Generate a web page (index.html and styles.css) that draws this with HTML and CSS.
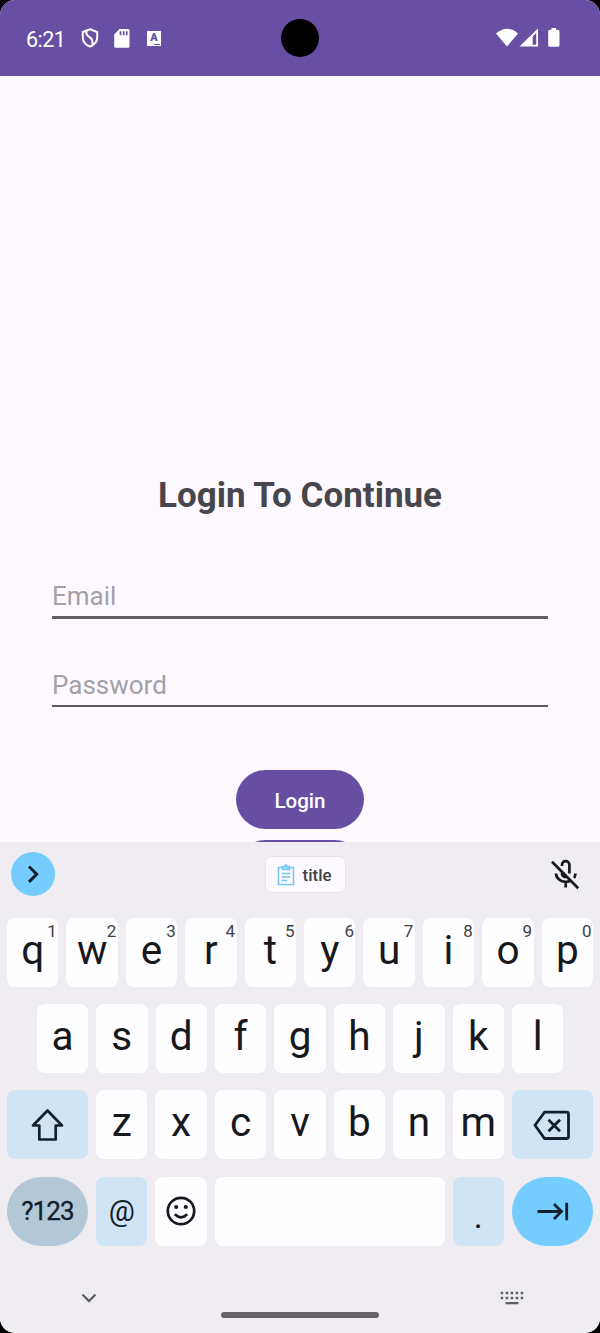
FILE: index.html
```html
<!DOCTYPE html>
<html lang="en">
<head>
<meta charset="utf-8">
<title>Login</title>
<link rel="stylesheet" href="styles.css">
</head>
<body>
<div class="phone">
  <header class="status">
    <span class="time">6:21</span>
    <svg class="ic shield" width="18" height="20" viewBox="0 0 18 20" fill="none" stroke="#fff" stroke-width="2"><path d="M9 1.300 16.200 4v5.200c0 4.500-3 7.700-7.200 9.300C4.800 16.900 1.800 13.700 1.800 9.200V4zM5.500 3c-.7 3 .6 4.800 3 6.200 2.600 1.600 3.600 4 2.800 7.600"/></svg>
    <svg class="ic sd" width="16" height="19" viewBox="0 0 16 19"><path fill="#fff" d="M5.500 0H14q1.500 0 1.500 1.500v15.700q0 1.500-1.500 1.500H1.700Q.2 18.700.2 17.200V5.500z"/><path stroke="#6750a4" stroke-width="1.700" d="M6.500 2.300v4M9.700 2.300v4M12.700 2.300v4"/></svg>
    <span class="abox">A<i></i></span>
    <span class="camera"></span>
    <svg class="right" width="66" height="20" viewBox="0 0 66 20" fill="#fff"><path d="M0 5.500Q11-4 22 5.500L11 18.500z"/><path d="M23.500 18.500 42 .5v18zM36.700 8.500v8.300h3.500V5z" fill-rule="evenodd"/><path d="M55.500 0h4.500v1.800h2q1.500 0 1.500 1.500v14q0 1.500-1.500 1.500h-8.300q-1.500 0-1.500-1.500v-14q0-1.500 1.500-1.500h1.800z"/></svg>
  </header>

  <main class="login">
    <h1 class="title">Login To Continue</h1>
    <div class="field email">Email</div>
    <div class="field password">Password</div>
    <button class="btn">Login</button>
    <div class="next"><div class="btn"></div></div>
  </main>

  <section class="keyboard">
    <div class="tools">
      <span class="expand"><svg width="44" height="44" viewBox="0 0 44 44" fill="none" stroke="#12202b" stroke-width="3"><path d="m18 14.500 7.700 7.700-7.700 7.700"/></svg></span>
      <span class="chip"><svg width="18" height="22" viewBox="0 0 18 22" fill="none" stroke="#78c5f0" stroke-width="1.500"><path d="M5 3.500H1.500v17h15v-17H13M4.700 9.500h8.600M4.700 13h8.600M4.700 16.500h5.500"/><path fill="#9ed9f8" d="M5.500 2.500h2L9 .8l1.500 1.700h2v3h-7z"/></svg>title</span>
      <svg class="mic" width="30" height="32" viewBox="0 0 30 32" fill="none" stroke="#17181b" stroke-width="2.700"><path d="m2 2.700 26.200 26.500M12 7V5.800a3.700 3.700 0 0 1 7.400 0v8.700M12 12v2.500a3.700 3.700 0 0 0 3.800 3.700M6 14.500c.3 5 4.500 8.300 9.700 8.300 1.800 0 3.400-.4 4.700-1.200M25.400 14.500c-.1 1.700-.5 3.200-1.300 4.400M15.700 23v5.500"/></svg>
    </div>
    <div class="row">
      <div class="key">q<sup>1</sup></div><div class="key">w<sup>2</sup></div><div class="key">e<sup>3</sup></div><div class="key">r<sup>4</sup></div><div class="key">t<sup>5</sup></div><div class="key">y<sup>6</sup></div><div class="key">u<sup>7</sup></div><div class="key">i<sup>8</sup></div><div class="key">o<sup>9</sup></div><div class="key">p<sup>0</sup></div>
    </div>
    <div class="row inset">
      <div class="key">a</div><div class="key">s</div><div class="key">d</div><div class="key">f</div><div class="key">g</div><div class="key">h</div><div class="key">j</div><div class="key">k</div><div class="key">l</div>
    </div>
    <div class="row">
      <div class="key wide blue"><svg width="34" height="34" viewBox="0 0 34 34" fill="none" stroke="#12202b" stroke-width="2.700" stroke-linejoin="round"><path d="M16.500 2.500 31 17.500H24.700V31.500H8.300V17.500H2z"/></svg></div>
      <div class="key">z</div><div class="key">x</div><div class="key">c</div><div class="key">v</div><div class="key">b</div><div class="key">n</div><div class="key">m</div>
      <div class="key wide blue"><svg width="38" height="32" viewBox="0 0 38 32" fill="none" stroke="#12202b" stroke-width="2.800" stroke-linejoin="round"><path d="M11.500 4.200H33.500Q35.500 4.200 35.500 6.200V28.500Q35.500 30.500 33.500 30.500H11.500L2 17.300z"/><path d="m15.500 11.800 11.500 11.500m0-11.500-11.500 11.500"/></svg></div>
    </div>
    <div class="row">
      <div class="key wide pill sym">?123</div>
      <div class="key blue at">@</div>
      <div class="key"><svg width="32" height="32" viewBox="0 0 32 32" fill="none" stroke="#17181b" stroke-width="2.700"><circle cx="16" cy="16" r="13.200"/><path d="M9.800 19.300q6.200 6 12.400 0"/><g fill="#17181b" stroke="none"><circle cx="11.200" cy="12" r="2.100"/><circle cx="20.800" cy="12" r="2.100"/></g></svg></div>
      <div class="key space"></div>
      <div class="key blue dot">.</div>
      <div class="key wide pill go"><svg width="34" height="20" viewBox="0 0 34 20" fill="none" stroke="#12202b" stroke-width="2.800"><path d="M1.500 9.500h24M18 2l7.500 7.500L18 17M30.700.7v17.600"/></svg></div>
    </div>
    <footer class="nav">
      <svg class="hide" width="18" height="12" viewBox="0 0 18 12" fill="none" stroke="#5f6065" stroke-width="2.300"><path d="m2.500 2.500 6.500 6.500 6.500-6.500"/></svg>
      <span class="handle"></span>
      <svg class="switch" width="24" height="15" viewBox="0 0 24 15" fill="none" stroke="#5f6065" stroke-width="2.500"><path stroke-dasharray="2.500 2.500" d="M.7 2h23M.7 7h23"/><path stroke-width="2.200" d="M5.500 12.200h13"/></svg>
    </footer>
  </section>
</div>
</body>
</html>
```
FILE: styles.css
```css
* { box-sizing: border-box; }
body { margin: 0; background: #000; font-family: Roboto, sans-serif; }
.phone { width: 600px; height: 1333px; display: flex; flex-direction: column; overflow: hidden; border-radius: 15px; background: #fef9fe; }

.status { height: 75.500px; flex: none; display: flex; align-items: center; padding: 1px 37px 0 26px; background: #674fa3; color: #fff; position: relative; }
.time { width: 55px; font-size: 21.500px; letter-spacing: -.5px; line-height: 26px; padding-top: 3px; }
.shield { margin-right: 15px; }
.sd { margin-right: 17px; }
.abox { width: 14px; height: 15px; background: #fff; color: #674fa3; font-size: 11px; font-weight: 900; line-height: 14px; text-align: center; position: relative; }
.abox i { position: absolute; right: 1px; bottom: 1px; width: 6px; height: 1px; background: #674fa3; }
.camera { position: absolute; left: 281px; top: 19px; width: 38px; height: 38px; border-radius: 50%; background: #000; }
.right { margin-left: auto; margin-right: 1px; }

.login { height: 766.500px; flex: none; display: flex; flex-direction: column; align-items: center; overflow: hidden; padding-top: 399.500px; }
.title { margin: 0; flex: none; font-size: 35px; line-height: 42px; font-weight: 700; color: #47464c; white-space: nowrap; }
.field { flex: none; width: 496px; font-size: 26px; line-height: 32px; font-weight: 400; color: #a3a1a7; }
.email { height: 55px; margin-top: 47px; padding-top: 16px; border-bottom: 3px solid #625c65; }
.password { height: 38px; margin-top: 50px; border-bottom: 2px solid #5c565f; }
.btn { width: 128.500px; height: 59px; border: 0; border-radius: 30px; background: #664fa3; color: #fff; font: 500 20.500px/59px Roboto, sans-serif; padding: 2px 0 0; flex: none; }
.login > .btn { margin-top: 62.500px; }
.next { flex: none; margin-top: 11.500px; height: 60px; }

.keyboard { flex: 1; background: #f0edf2; display: flex; flex-direction: column; padding: 0 7px; }
.tools { height: 76px; flex: none; display: flex; align-items: flex-start; justify-content: space-between; padding: 10px 13px 0 4px; }
.expand { width: 44px; height: 44px; border-radius: 50%; background: #75ccff; }
.chip { height: 37px; width: 81px; margin: 4px 0 0 5px; border-radius: 7px; border: 1px solid #e6e4ea; background: #fcfafe; display: flex; align-items: center; padding-left: 11px; gap: 8px; color: #414247; font-size: 17px; font-weight: 500; }
.mic { margin-top: 7px; }
.row { display: flex; gap: 8px; height: 69px; margin-bottom: 17.200px; flex: none; }
.inset { padding: 0 29.700px; }
.key { flex: 1; min-width: 0; border-radius: 8px; background: #fefdff; color: #17181b; font-size: 40.500px; line-height: 64px; text-align: center; position: relative; }
.key svg { display: block; margin: 18px auto 0; }
.key sup { position: absolute; top: 4px; right: 1.500px; font-size: 17px; line-height: 19px; color: #3f4046; }
.wide { flex: 0 0 81px; }
.blue { background: #cfe4f5; }
.pill { border-radius: 34.500px; }
.sym { background: #b3c8d6; font-size: 26px; font-weight: 400; letter-spacing: -.9px; line-height: 69px; color: #12202b; -webkit-text-stroke: .3px #12202b; }
.at { font-size: 29px; line-height: 68px; color: #12202b; }
.space { flex: 0 0 229.600px; }
.dot { font-size: 34px; line-height: 78px; }
.go { background: #75ccff; }
.key.go svg { margin-top: 25px; }
.nav { flex: 1; position: relative; margin: -17px -7px 0; }
.hide { position: absolute; left: 80px; top: 46px; }
.handle { position: absolute; left: 221px; top: 66px; width: 158px; height: 6px; border-radius: 3px; background: #656268; }
.switch { position: absolute; left: 500px; top: 45px; }
```
